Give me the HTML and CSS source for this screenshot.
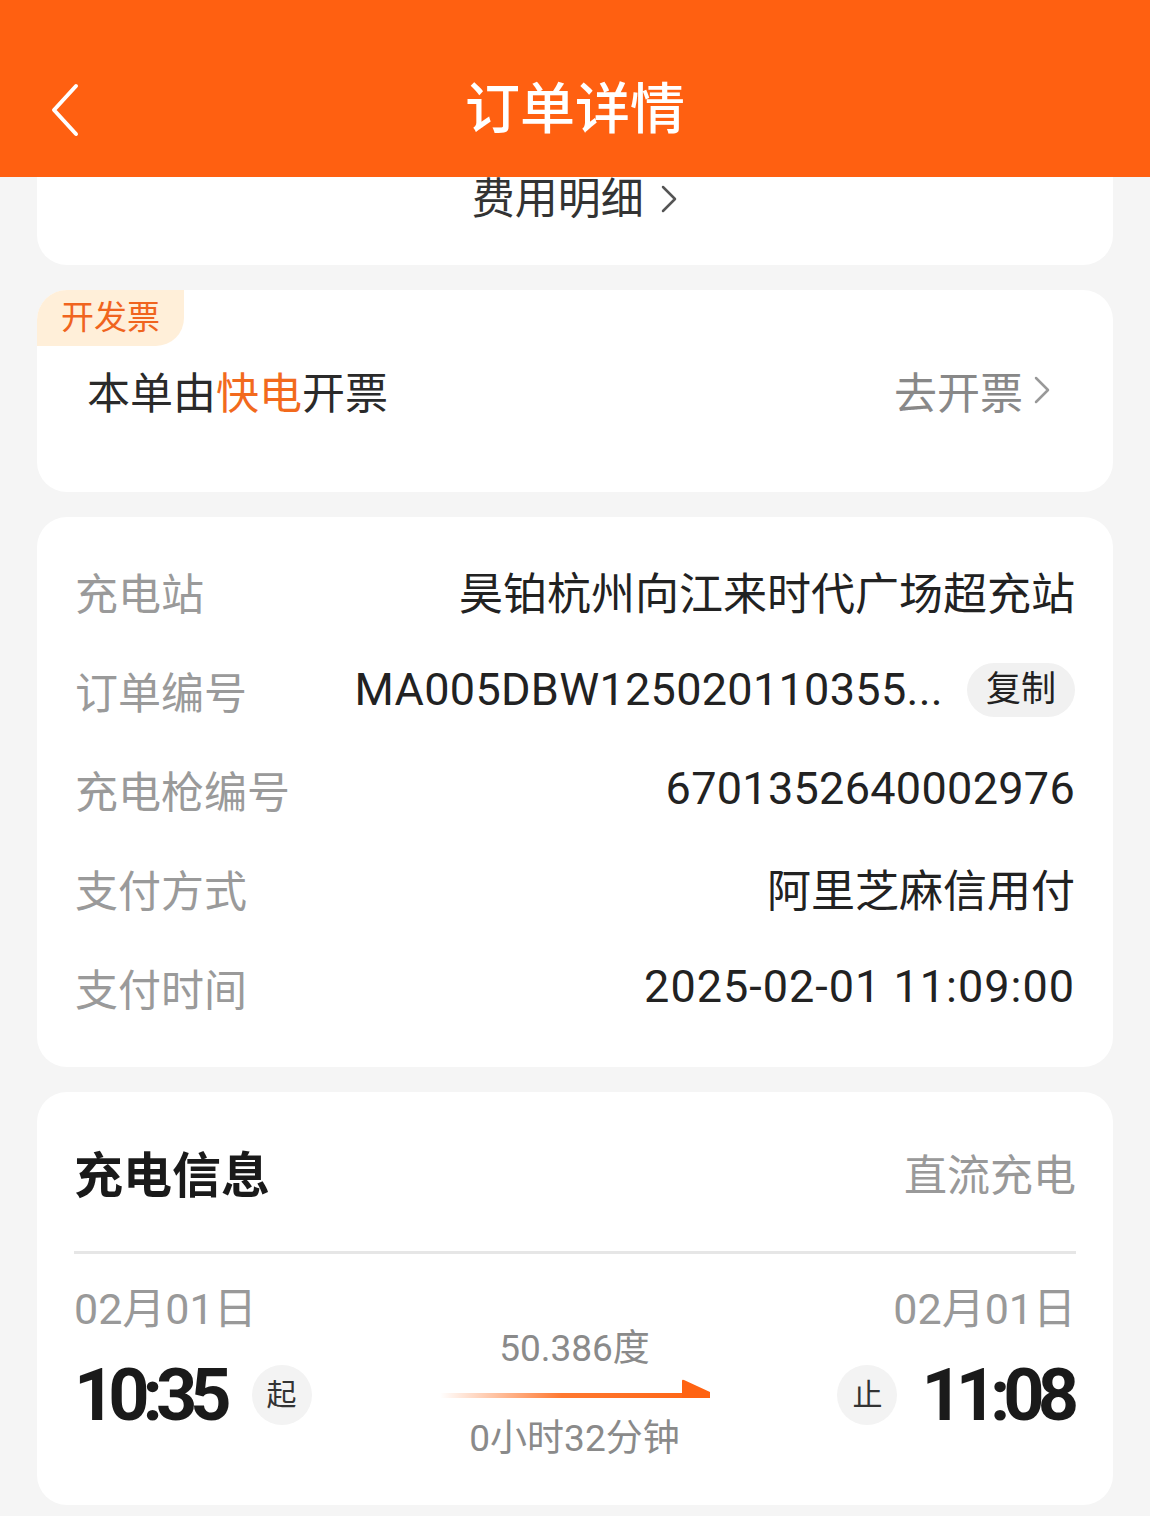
FILE: index.html
```html
<!DOCTYPE html>
<html lang="zh-CN">
<head>
    <meta charset="UTF-8">
    <meta name="viewport" content="width=device-width, initial-scale=1.0">
    <title>订单详情</title>
    <link rel="stylesheet" href="styles.css">
</head>
<body>
    <div class="header">
        <span class="back">
            <svg width="34" height="54" viewBox="0 0 34 54"><path d="M28 3 L6 27 L28 51" fill="none" stroke="#fff" stroke-width="4" stroke-linecap="round" stroke-linejoin="round"/></svg>
        </span>
        <h1>订单详情</h1>
    </div>

    <div class="card fee-card">
        <div class="fee-link">费用明细 <span class="chev">
            <svg width="18" height="30" viewBox="0 0 18 30"><path d="M3 3 L15 15 L3 27" fill="none" stroke="#555" stroke-width="2.5" stroke-linecap="round" stroke-linejoin="round"/></svg>
        </span></div>
    </div>

    <div class="card invoice-card">
        <div class="badge">开发票</div>
        <div class="invoice-row">
            <div class="invoice-text">本单由<span class="hl">快电</span>开票</div>
            <div class="invoice-go">去开票 <span class="chev">
                <svg width="18" height="30" viewBox="0 0 18 30"><path d="M3 3 L15 15 L3 27" fill="none" stroke="#999" stroke-width="2.5" stroke-linecap="round" stroke-linejoin="round"/></svg>
            </span></div>
        </div>
    </div>

    <div class="card info-card">
        <div class="info-row">
            <span class="label">充电站</span>
            <span class="value">昊铂杭州向江来时代广场超充站</span>
        </div>
        <div class="info-row">
            <span class="label">订单编号</span>
            <span class="value"><span class="num">MA005DBW125020110355...</span><span class="copy">复制</span></span>
        </div>
        <div class="info-row">
            <span class="label">充电枪编号</span>
            <span class="value num">6701352640002976</span>
        </div>
        <div class="info-row">
            <span class="label">支付方式</span>
            <span class="value">阿里芝麻信用付</span>
        </div>
        <div class="info-row">
            <span class="label">支付时间</span>
            <span class="value num wide">2025-02-01 11:09:00</span>
        </div>
    </div>

    <div class="card charge-card">
        <div class="charge-head">
            <h2>充电信息</h2>
            <span class="charge-type">直流充电</span>
        </div>
        <div class="divider"></div>
        <div class="charge-body">
            <div class="point">
                <div class="date">02月01日</div>
                <div class="time-line">
                    <span class="time">10:35</span>
                    <span class="dot">起</span>
                </div>
            </div>
            <div class="middle">
                <div class="mid-text">50.386度</div>
                <div class="arrow">
                    <svg width="270" height="20" viewBox="0 0 270 20">
                        <defs>
                            <linearGradient id="fade" x1="0" y1="0" x2="1" y2="0">
                                <stop offset="0" stop-color="#ff6a1a" stop-opacity="0"/>
                                <stop offset="0.45" stop-color="#ff6a1a" stop-opacity="0.9"/>
                                <stop offset="1" stop-color="#ff6312"/>
                            </linearGradient>
                        </defs>
                        <rect x="0" y="14" width="270" height="5" fill="url(#fade)"/>
                        <path d="M242 2 Q242 0 244 1 L270 13 L270 19 L242 19 Z" fill="#ff6312"/>
                    </svg>
                </div>
                <div class="mid-text">0小时32分钟</div>
            </div>
            <div class="point right">
                <div class="date">02月01日</div>
                <div class="time-line">
                    <span class="dot">止</span>
                    <span class="time">11:08</span>
                </div>
            </div>
        </div>
    </div>
</body>
</html>
```

FILE: styles.css
```css
body {
    margin: 0;
    padding: 0;
    background: #f5f5f5;
    font-family: Roboto, "Noto Sans CJK SC", sans-serif;
    color: #222;
}

.header {
    height: 177px;
    background: #ff6011;
    display: flex;
    align-items: flex-end;
    justify-content: center;
    position: relative;
}
.header h1 {
    margin: 0 0 35px 0;
    font-size: 55px;
    font-weight: 500;
    line-height: 66px;
    color: #fff;
}
.back {
    position: absolute;
    left: 48px;
    top: 83px;
}

.card {
    background: #fff;
    margin: 0 37px 25px 37px;
    border-radius: 30px;
}

/* fee card: top is hidden under the header */
.fee-card {
    height: 88px;
    border-radius: 0 0 30px 30px;
}
.fee-link {
    text-align: center;
    font-size: 43px;
    line-height: 44px;
    color: #333;
}
.chev {
    display: inline-block;
    vertical-align: middle;
    margin-left: 6px;
    position: relative;
    top: -4px;
}

.invoice-card {
    height: 202px;
    box-sizing: border-box;
}
.badge {
    display: inline-block;
    background: #ffefd9;
    color: #f0641e;
    font-size: 33px;
    line-height: 56px;
    height: 56px;
    padding: 0 24px;
    border-radius: 30px 0 28px 0;
}
.invoice-row {
    display: flex;
    justify-content: space-between;
    align-items: center;
    margin-top: 16px;
    padding: 0 62px 0 50px;
    height: 56px;
}
.invoice-text {
    font-size: 43px;
    color: #2a2a2a;
}
.hl {
    color: #f26a1d;
}
.invoice-go {
    font-size: 43px;
    color: #888;
    display: flex;
    align-items: center;
}
.invoice-go .chev {
    top: 0;
    margin-left: 10px;
}

.info-card {
    padding: 24px 38px 31px 38px;
}
.info-row {
    height: 99px;
    display: flex;
    justify-content: space-between;
    align-items: center;
}
.label {
    font-size: 43px;
    color: #9a9a9a;
}
.value {
    font-size: 44px;
    color: #222;
    display: flex;
    align-items: center;
}
.num {
    font-size: 45px;
    letter-spacing: 0.3px;
}
.num.wide {
    letter-spacing: 1px;
}
.copy {
    display: inline-block;
    background: #f1f1f1;
    border-radius: 27px;
    font-size: 35px;
    line-height: 54px;
    padding: 0 19px;
    margin-left: 24px;
    color: #222;
}

.charge-card {
    padding: 0 37px 44px 37px;
}
.charge-head {
    height: 159px;
    display: flex;
    justify-content: space-between;
    align-items: center;
}
.charge-head h2 {
    margin: 0;
    font-size: 49px;
    font-weight: 700;
    color: #1a1a1a;
}
.charge-type {
    font-size: 43px;
    color: #999;
}
.divider {
    height: 3px;
    background: #e6e6e6;
}
.charge-body {
    display: flex;
    justify-content: space-between;
    align-items: flex-start;
    margin-top: 30px;
}
.point.right {
    text-align: right;
}
.date {
    font-size: 43px;
    line-height: 50px;
    color: #999;
}
.time-line {
    display: flex;
    align-items: center;
    height: 70px;
    margin-top: 26px;
}
.point.right .time-line {
    justify-content: flex-end;
}
.time {
    font-weight: 700;
    font-size: 72px;
    letter-spacing: -7px;
    color: #1a1a1a;
}
.point.right .time {
    margin-right: 4px;
}
.dot {
    width: 60px;
    height: 60px;
    border-radius: 50%;
    background: #f3f3f3;
    font-size: 30px;
    line-height: 60px;
    text-align: center;
    color: #333;
    margin-left: 27px;
}
.point.right .dot {
    margin-left: 0;
    margin-right: 24px;
}
.middle {
    margin-top: 43px;
    display: flex;
    flex-direction: column;
    align-items: center;
}
.mid-text {
    font-size: 37px;
    line-height: 44px;
    color: #8a8a8a;
}
.arrow {
    height: 46px;
    box-sizing: border-box;
    padding-top: 8px;
}
.arrow svg {
    display: block;
}
```
